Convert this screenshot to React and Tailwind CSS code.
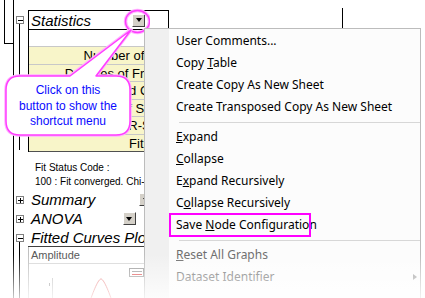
import React from 'react';

// lignes de la fiche du tableau Statistics
const statRows = [
  'Number of Points',
  'Degrees of Freedom',
  'Reduced Chi-Sqr',
  'Residual Sum of Squares',
  'Adj. R-Square',
  'Fit Status',
];

const menuItems = [
  { label: 'User Comments...' },
  { label: 'Copy ', u: 'T', rest: 'able' },
  { label: 'Create Copy As New Sheet' },
  { label: 'Create Transposed Copy As New Sheet' },
  { sep: true },
  { label: '', u: 'E', rest: 'xpand' },
  { label: '', u: 'C', rest: 'ollapse' },
  { label: 'E', u: 'x', rest: 'pand Recursively' },
  { label: 'C', u: 'o', rest: 'llapse Recursively' },
  { label: 'Save ', u: 'N', rest: 'ode Configuration', boxed: true },
  { sep: true },
  { label: '', u: 'R', rest: 'eset All Graphs', disabled: true },
  { label: 'Dataset Identifier', disabled: true, sub: true },
];

const DropButton = () => (
  <span className="flex h-[13px] w-[13px] items-center justify-center border border-t-white border-l-white border-r-[#404040] border-b-[#404040] bg-[#d4d0c8]">
    <span className="h-0 w-0 border-x-[3.5px] border-t-[4px] border-x-transparent border-t-black" />
  </span>
);

const TreeGutter = () => (
  <svg width="28" height="298" className="shrink-0">
    <g stroke="#000" strokeWidth="1" shapeRendering="crispEdges">
      <line x1="4.5" y1="0" x2="4.5" y2="43.5" />
      <line x1="4.5" y1="43.5" x2="13" y2="43.5" />
      <line x1="13.5" y1="0" x2="13.5" y2="298" />
      <line x1="19.5" y1="24" x2="19.5" y2="150" />
      <line x1="19.5" y1="242" x2="19.5" y2="298" />
    </g>
    {[
      { y: 16, open: true },
      { y: 196, open: false },
      { y: 215, open: false },
      { y: 234, open: true },
    ].map((b) => (
      <g key={b.y} shapeRendering="crispEdges">
        <rect x="16.5" y={b.y + 0.5} width="7" height="7" fill="#fff" stroke="#808080" />
        <line x1="18" y1={b.y + 4} x2="23" y2={b.y + 4} stroke="#000" />
        {!b.open && <line x1="20.5" y1={b.y + 2} x2="20.5" y2={b.y + 7} stroke="#000" />}
      </g>
    ))}
  </svg>
);

export default function App() {
  return (
    <div className="relative h-[298px] w-[425px] overflow-hidden bg-white font-['Liberation_Sans',Arial,sans-serif] text-black">
      <div className="flex">
        <TreeGutter />
        <div className="flex w-[330px] flex-col">
          {/* entête Statistics */}
          <div className="mt-[10px] flex">
            <div className="flex h-[20px] w-[141px] items-center justify-between border border-black pl-[2px] pr-[23px]">
              <span className="text-[15px] italic leading-none">Statistics</span>
              <DropButton />
            </div>
            <div className="mt-[-2px] ml-[173px] h-[20px] w-px bg-black" />
          </div>

          {/* tableau */}
          <div className="w-[314px] border-l border-black">
            <div className="h-[17px] border-b border-[#c8c8c8] bg-white" />
            {statRows.map((r, i) => (
              <div
                key={r}
                className={`flex items-center border-b bg-[#f8f5c9] ${i % 2 ? 'h-[17px]' : 'h-[18px]'} ${
                  i === statRows.length - 1 ? 'border-[#505050]' : 'border-[#c8c8c8]'
                }`}
              >
                <span className="w-[157px] pr-[2px] text-right text-[13px] leading-none whitespace-nowrap">{r}</span>
              </div>
            ))}
          </div>

          <div className="mt-[9px] pl-[7px] text-[10px] leading-[14px] whitespace-nowrap">
            <p>Fit Status Code :</p>
            <p>100 : Fit converged. Chi-Sqr</p>
          </div>

          <div className="relative mt-[1px]">
            <div className="flex h-[19px] items-center">
              <span className="pl-[3px] text-[15px] italic leading-none">Summary</span>
              <span className="ml-[44px]"><DropButton /></span>
            </div>
            <div className="flex h-[19px] items-center">
              <span className="pl-[3px] text-[15px] italic leading-none">ANOVA</span>
              <span className="ml-[40px]"><DropButton /></span>
            </div>
            <div className="flex h-[19px] w-[314px] items-center border-b border-[#404040]">
              <span className="pl-[3px] text-[15px] italic leading-none whitespace-nowrap">Fitted Curves Plot</span>
            </div>
            <div className="w-[314px] border-l border-[#c0c0c0]">
              <div className="flex h-[17px] items-center border-b border-[#d8d8d8] pl-[2px] text-[11px] text-[#555]">Amplitude</div>
              <svg width="314" height="40">
                <rect x="100.5" y="4.5" width="14" height="8" fill="#fff" stroke="#9a9a9a" />
                <line x1="103" y1="7.5" x2="113" y2="7.5" stroke="#9a9a9a" />
                <line x1="103" y1="10.5" x2="113" y2="10.5" stroke="#e05050" />
                <line x1="23.5" y1="14" x2="23.5" y2="40" stroke="#c0c0c0" />
                <line x1="20.5" y1="19" x2="20.5" y2="22" stroke="#909090" />
                <path d="M 60 40 C 66 22, 70 15, 72 15 C 74 15, 78 22, 84 40" fill="none" stroke="#e87070" strokeWidth="1" />
              </svg>
            </div>
          </div>
        </div>
      </div>

      {/* bulle d'aide */}
      <svg width="150" height="140" className="pointer-events-none absolute left-0 top-0">
        <ellipse cx="137.5" cy="21.5" rx="12" ry="11" fill="none" stroke="#ffb3ff" strokeWidth="3.5" />
        <ellipse cx="137.5" cy="21.5" rx="12" ry="11" fill="none" stroke="#ff3dff" strokeWidth="1.5" />
        <path
          d="M 20 76 L 70 76 L 131 30 L 96 76 L 116 76 Q 130 76 130 90 L 130 121 Q 130 135 116 135 L 20 135 Q 6 135 6 121 L 6 90 Q 6 76 20 76 Z"
          fill="#fff"
          stroke="#ffb3ff"
          strokeWidth="3.5"
          strokeLinejoin="round"
        />
        <path
          d="M 20 76 L 70 76 L 131 30 L 96 76 L 116 76 Q 130 76 130 90 L 130 121 Q 130 135 116 135 L 20 135 Q 6 135 6 121 L 6 90 Q 6 76 20 76 Z"
          fill="#fff"
          stroke="#ff3dff"
          strokeWidth="1.5"
          strokeLinejoin="round"
        />
      </svg>
      <div className="absolute left-[6px] top-[83px] w-[124px] text-center text-[12px] leading-[15.5px] text-[#0a0aff]">
        <p>Click on this</p>
        <p>button to show the</p>
        <p>shortcut menu</p>
      </div>

      {/* menu contextuel */}
      <div className="absolute left-[144px] top-[28px] flex h-[290px] w-[277px] border border-[#bcbcbc] bg-[#fcfcfc] font-['Noto_Sans',sans-serif] text-[12px] text-black">
        <div className="w-[24px] shrink-0 bg-[#f0f0f0]" />
        <div className="flex flex-1 flex-col pt-[1px]">
          {menuItems.map((m, i) =>
            m.sep ? (
              <div key={i} className="mb-[3px] ml-[10px] mt-[4px] h-px bg-[#d7d7d7]" />
            ) : (
              <div
                key={i}
                className={`relative flex h-[22px] items-center pl-[7px] whitespace-nowrap ${m.disabled ? 'text-[#6d6d6d]' : ''}`}
              >
                <span>
                  {m.label}
                  {m.u && <u>{m.u}</u>}
                  {m.rest}
                </span>
                {m.boxed && <span className="absolute left-0 top-[-1px] h-[24px] w-[142px] border-2 border-[#ff00ff]" />}
                {m.sub && (
                  <span className="absolute right-[3px] top-[8px] h-0 w-0 border-y-[3.5px] border-l-[4px] border-y-transparent border-l-[#a0a0a0]" />
                )}
              </div>
            )
          )}
        </div>
      </div>

      {/* fondu du bas */}
      <div className="pointer-events-none absolute inset-x-0 bottom-0 h-[44px] bg-linear-to-b from-white/0 to-white/80" />
    </div>
  );
}
